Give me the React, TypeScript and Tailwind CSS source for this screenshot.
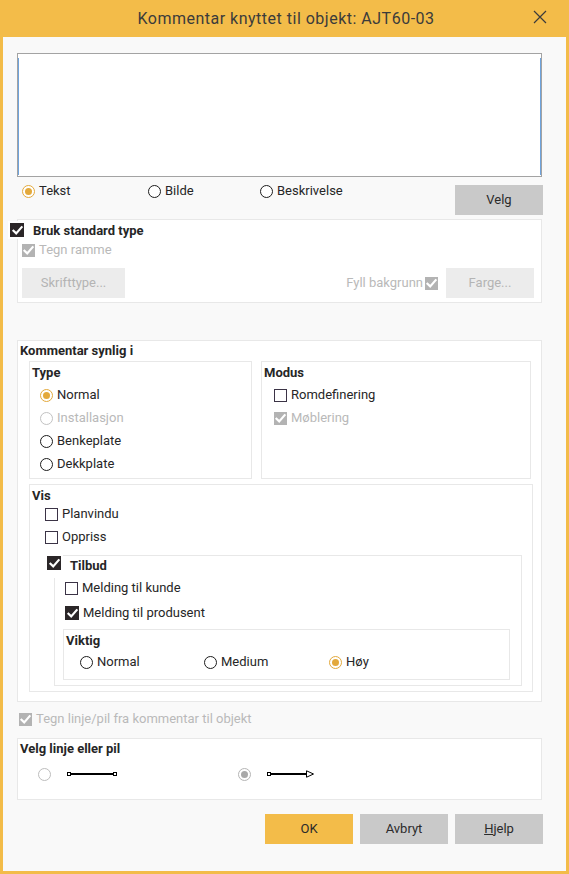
import React from "react";

const Check = ({ color = "white" }: { color?: string }) => (
  <svg width="13" height="13" viewBox="0 0 13 13" className="block">
    <path d="M2.5 6.8 L5.2 9.4 L10.6 3.2" fill="none" stroke={color} strokeWidth="2.2" strokeLinecap="square" />
  </svg>
);

type CbKind = "dark" | "disabled" | "empty";

const Checkbox = ({ kind }: { kind: CbKind }) => {
  if (kind === "empty")
    return <span className="block w-[13px] h-[13px] shrink-0 border border-[#3b3346] bg-white" />;
  if (kind === "dark")
    return (
      <span className="block w-[14px] h-[14px] shrink-0 bg-[#2b2628] flex items-center justify-center">
        <Check />
      </span>
    );
  return (
    <span className="block w-[13px] h-[13px] shrink-0 bg-[#b3b3b3] flex items-center justify-center">
      <Check />
    </span>
  );
};

type RKind = "on" | "off" | "disabled" | "lightoff" | "grayon";

const Radio = ({ kind }: { kind: RKind }) => {
  if (kind === "on")
    return (
      <span className="block w-[13px] h-[13px] shrink-0 rounded-full border border-[#e3a93c] bg-white flex items-center justify-center">
        <span className="block w-[7px] h-[7px] rounded-full bg-[#e3a93c]" />
      </span>
    );
  if (kind === "grayon")
    return (
      <span className="block w-[13px] h-[13px] shrink-0 rounded-full border border-[#b5b5b5] bg-white flex items-center justify-center">
        <span className="block w-[7px] h-[7px] rounded-full bg-[#a9a9a9]" />
      </span>
    );
  if (kind === "disabled")
    return <span className="block w-[13px] h-[13px] shrink-0 rounded-full border border-[#c2c2c2] bg-white" />;
  if (kind === "lightoff")
    return <span className="block w-[13px] h-[13px] shrink-0 rounded-full border border-[#bdbdbd] bg-white" />;
  return <span className="block w-[13px] h-[13px] shrink-0 rounded-full border border-[#1c1c1c] bg-white" />;
};

const RadioItem = ({ kind, label, className = "" }: { kind: RKind; label: string; className?: string }) => (
  <div className={`flex items-center gap-[4px] h-[16px] ${className}`}>
    <Radio kind={kind} />
    <span className={kind === "disabled" ? "text-[#b9b9b9]" : "text-[#262626]"}>{label}</span>
  </div>
);

const CheckItem = ({ kind, label, className = "" }: { kind: CbKind; label: string; className?: string }) => (
  <div className={`flex items-center gap-[4px] h-[16px] ${className}`}>
    <Checkbox kind={kind} />
    <span className={kind === "disabled" ? "text-[#b9b9b9]" : "text-[#262626]"}>{label}</span>
  </div>
);

const LineIcon = ({ arrow }: { arrow?: boolean }) => (
  <svg width="50" height="8" viewBox="0 0 50 8" className="block">
    <rect x="0.5" y="2.5" width="3" height="3" fill="white" stroke="black" strokeWidth="1" />
    <line x1="4" y1="4" x2={arrow ? 39 : 46} y2="4" stroke="black" strokeWidth="2" />
    {arrow ? (
      <>
        <line x1="39.5" y1="0.5" x2="39.5" y2="7.5" stroke="black" strokeWidth="1" />
        <path d="M40 1 L46.5 4 L40 7" fill="white" stroke="black" strokeWidth="1" />
      </>
    ) : (
      <rect x="46.5" y="2.5" width="3" height="3" fill="white" stroke="black" strokeWidth="1" />
    )}
  </svg>
);

export default function App() {
  return (
    <div className="w-[569px] h-[874px] bg-[#f3bc49] flex flex-col px-[3px] pb-[3px] font-['Roboto',sans-serif] text-[13px] leading-[16px] text-[#262626]">
      {/* Title bar */}
      <div className="h-[37px] shrink-0 relative flex items-center justify-center">
        <span className="text-[16px] tracking-[0.5px] text-[#3b3b3b] mt-[1px] ml-[3px]">Kommentar knyttet til objekt: AJT60-03</span>
        <svg width="14" height="14" viewBox="0 0 14 14" className="absolute right-[19px] top-[10px]">
          <path d="M1 1 L13 13 M13 1 L1 13" stroke="#3b3b3b" strokeWidth="1.2" fill="none" />
        </svg>
      </div>

      {/* Body */}
      <div className="flex-1 bg-[#f9f9f9] pl-[14px] pr-[23px] pt-[16px] flex flex-col">
        {/* Text area */}
        <div className="w-[525px] h-[124px] border border-[#a3a3a3] bg-white flex">
          <div className="flex-1 mt-[4px] mb-[1px] border-x border-[#6fa3dc]" />
        </div>

        {/* Radio row + Velg */}
        <div className="flex items-start mt-[8px] h-[30px]">
          <div className="flex items-start -mt-[2px] pl-[5px]">
            <RadioItem kind="on" label="Tekst" className="w-[126px]" />
            <RadioItem kind="off" label="Bilde" className="w-[112px]" />
            <RadioItem kind="off" label="Beskrivelse" />
          </div>
          <div className="ml-auto w-[88px] h-[30px] bg-[#c9c9c9] flex items-center justify-center text-[#2b2b2b]">Velg</div>
        </div>

        {/* Standard type group */}
        <div className="mt-[4px] w-[525px] h-[84px] relative border border-[#e8e8e8] bg-white flex flex-col px-[4px]">
          <div className="absolute left-[-10px] top-[1px] p-[2px] bg-white">
            <Checkbox kind="dark" />
          </div>
          <div className="mt-[3px] pl-[11px] h-[16px] font-bold text-[#262626]">Bruk standard type</div>
          <CheckItem kind="disabled" label="Tegn ramme" className="mt-[3px]" />
          <div className="mt-[10px] h-[30px] flex items-center pr-[3px]">
            <div className="w-[103px] h-[30px] bg-[#ececec] text-[#b4b4b4] flex items-center justify-center">Skrifttype...</div>
            <div className="ml-auto flex items-center gap-[2px]">
              <span className="text-[#b9b9b9]">Fyll bakgrunn</span>
              <Checkbox kind="disabled" />
            </div>
            <div className="ml-[8px] w-[88px] h-[30px] bg-[#ececec] text-[#b4b4b4] flex items-center justify-center">Farge...</div>
          </div>
        </div>

        {/* Kommentar synlig i */}
        <div className="mt-[37px] w-[525px] h-[362px] border border-[#e8e8e8] bg-white flex flex-col">
          <div className="mt-[2px] pl-[2px] h-[16px] font-bold">Kommentar synlig i</div>
          <div className="mt-[2px] ml-[11px] flex gap-[9px]">
            <div className="w-[223px] h-[118px] border border-[#e8e8e8] flex flex-col">
              <div className="mt-[3px] pl-[2px] h-[16px] font-bold">Type</div>
              <div className="mt-[6px] pl-[10px] flex flex-col gap-[7px]">
                <RadioItem kind="on" label="Normal" />
                <RadioItem kind="disabled" label="Installasjon" />
                <RadioItem kind="off" label="Benkeplate" />
                <RadioItem kind="off" label="Dekkplate" />
              </div>
            </div>
            <div className="w-[270px] h-[118px] border border-[#e8e8e8] flex flex-col">
              <div className="mt-[3px] pl-[2px] h-[16px] font-bold">Modus</div>
              <div className="mt-[6px] pl-[12px] flex flex-col gap-[7px]">
                <CheckItem kind="empty" label="Romdefinering" />
                <CheckItem kind="disabled" label="Møblering" />
              </div>
            </div>
          </div>

          {/* Vis */}
          <div className="mt-[5px] ml-[11px] w-[504px] h-[208px] border border-[#e8e8e8] flex flex-col">
            <div className="mt-[3px] pl-[2px] h-[16px] font-bold">Vis</div>
            <div className="mt-[2px] pl-[15px] flex flex-col gap-[7px]">
              <CheckItem kind="empty" label="Planvindu" />
              <CheckItem kind="empty" label="Oppriss" />
            </div>

            {/* Tilbud */}
            <div className="mt-[10px] ml-[24px] w-[468px] h-[131px] relative border border-[#e8e8e8] flex flex-col">
              <div className="absolute left-[-10px] top-[-2px] w-[18px] h-[24px] pt-[2px] pl-[2px] bg-white">
                <Checkbox kind="dark" />
              </div>
              <div className="mt-[2px] pl-[15px] h-[16px] font-bold">Tilbud</div>
              <div className="mt-[6px] pl-[10px] flex flex-col gap-[9px]">
                <CheckItem kind="empty" label="Melding til kunde" />
                <CheckItem kind="dark" label="Melding til produsent" />
              </div>
              {/* Viktig */}
              <div className="mt-[8px] ml-[8px] w-[447px] h-[51px] border border-[#e8e8e8] flex flex-col">
                <div className="mt-[3px] pl-[2px] h-[16px] font-bold">Viktig</div>
                <div className="mt-[5px] pl-[16px] flex">
                  <RadioItem kind="off" label="Normal" className="w-[124px]" />
                  <RadioItem kind="off" label="Medium" className="w-[125px]" />
                  <RadioItem kind="on" label="Høy" />
                </div>
              </div>
            </div>
          </div>
        </div>

        {/* Tegn linje */}
        <CheckItem kind="disabled" label="Tegn linje/pil fra kommentar til objekt" className="mt-[9px] pl-[2px]" />

        {/* Velg linje eller pil */}
        <div className="mt-[11px] w-[525px] h-[62px] border border-[#e8e8e8] bg-white flex flex-col">
          <div className="mt-[2px] pl-[2px] h-[16px] font-bold">Velg linje eller pil</div>
          <div className="mt-[9px] pl-[20px] flex items-center h-[16px]">
            <div className="w-[200px] flex items-center">
              <Radio kind="lightoff" />
              <span className="ml-[16px]"><LineIcon /></span>
            </div>
            <div className="flex items-center">
              <Radio kind="grayon" />
              <span className="ml-[16px]"><LineIcon arrow /></span>
            </div>
          </div>
        </div>

        {/* Buttons */}
        <div className="mt-[14px] flex justify-end gap-[7px] pr-[0px]">
          <div className="w-[88px] h-[30px] bg-[#f3bc49] flex items-center justify-center text-[#2b2b2b]">OK</div>
          <div className="w-[88px] h-[30px] bg-[#c9c9c9] flex items-center justify-center text-[#2b2b2b]">Avbryt</div>
          <div className="w-[88px] h-[30px] bg-[#c9c9c9] flex items-center justify-center text-[#2b2b2b]">
            <span><span className="underline">H</span>jelp</span>
          </div>
        </div>
      </div>
    </div>
  );
}
